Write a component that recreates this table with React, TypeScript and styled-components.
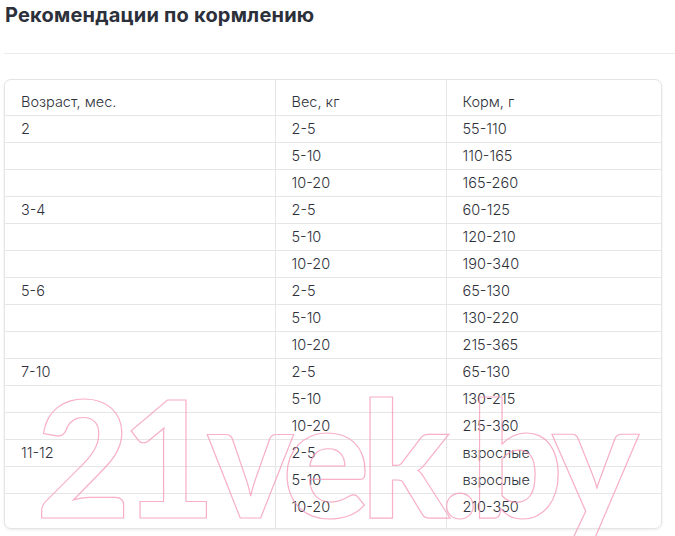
import styled, { createGlobalStyle } from 'styled-components';

const GlobalStyle = createGlobalStyle`
  html, body {
    margin: 0;
    padding: 0;
    background: #ffffff;
  }
  body {
    font-family: Inter, "Noto Sans", sans-serif;
  }
`;

type Row = { age?: string; weight: string; food: string };

const rows: Row[] = [
  { age: '2', weight: '2-5', food: '55-110' },
  { weight: '5-10', food: '110-165' },
  { weight: '10-20', food: '165-260' },
  { age: '3-4', weight: '2-5', food: '60-125' },
  { weight: '5-10', food: '120-210' },
  { weight: '10-20', food: '190-340' },
  { age: '5-6', weight: '2-5', food: '65-130' },
  { weight: '5-10', food: '130-220' },
  { weight: '10-20', food: '215-365' },
  { age: '7-10', weight: '2-5', food: '65-130' },
  { weight: '5-10', food: '130-215' },
  { weight: '10-20', food: '215-360' },
  { age: '11-12', weight: '2-5', food: 'взрослые' },
  { weight: '5-10', food: 'взрослые' },
  { weight: '10-20', food: '210-350' },
];

export default function App() {
  return (
    <>
      <GlobalStyle />
      <Page>
        <Heading>Рекомендации по кормлению</Heading>
        <Divider />
        <TableBox>
          <Table>
            <colgroup>
              <col style={{ width: 270 }} />
              <col style={{ width: 171 }} />
              <col />
            </colgroup>
            <tbody>
              <tr>
                <Cell $edge="top">Возраст, мес.</Cell>
                <Cell $edge="top">Вес, кг</Cell>
                <Cell $edge="top">Корм, г</Cell>
              </tr>
              {rows.map((r, i) => {
                const edge = i === rows.length - 1 ? 'bottom' : undefined;
                return (
                  <tr key={i}>
                    <Cell $edge={edge}>{r.age ?? ''}</Cell>
                    <Cell $edge={edge}>{r.weight}</Cell>
                    <Cell $edge={edge}>{r.food}</Cell>
                  </tr>
                );
              })}
            </tbody>
          </Table>
        </TableBox>
        <Watermark aria-hidden>21vek.by</Watermark>
      </Page>
    </>
  );
}

const Page = styled.div`
  position: relative;
  height: 536px;
  overflow: hidden;
  padding: 0 0 0 4px;
  box-sizing: border-box;
`;

const Heading = styled.h2`
  margin: 0;
  padding: 3px 0 0 1px;
  font-family: Inter, "Noto Sans", sans-serif;
  font-size: 20px;
  font-weight: 700;
  line-height: 24px;
  color: #2c303b;
  letter-spacing: 0.2px;
`;

const Divider = styled.div`
  height: 1px;
  background: #ebebeb;
  margin-top: 26px;
`;

const TableBox = styled.div`
  margin-top: 25px;
  width: 658px;
  border: 1px solid #e4e4e4;
  border-radius: 7px;
  box-shadow: 0 1px 3px rgba(0, 0, 0, 0.08);
  overflow: hidden;
  box-sizing: border-box;
`;

const Table = styled.table`
  width: 100%;
  border-collapse: collapse;
  table-layout: fixed;

  tr + tr td {
    border-top: 1px solid #e6e6e6;
  }
`;

const Cell = styled.td<{ $edge?: 'top' | 'bottom' }>`
  box-sizing: border-box;
  height: ${(p) => (p.$edge ? 35 : 27)}px;
  padding: ${(p) =>
    p.$edge === 'top' ? '8px 0 0 16px' : p.$edge === 'bottom' ? '0 0 8px 16px' : '0 0 0 16px'};
  font-family: Inter, "Noto Sans", sans-serif;
  font-size: 14.5px;
  font-weight: 300;
  color: #2f323a;
  vertical-align: middle;
  white-space: nowrap;

  & + & {
    border-left: 1px solid #e6e6e6;
  }
`;

const Watermark = styled.div`
  position: absolute;
  left: 36px;
  top: 374px;
  font-family: Lato, "Noto Sans", sans-serif;
  font-weight: 900;
  font-size: 163px;
  line-height: 1;
  letter-spacing: -9px;
  color: transparent;
  -webkit-text-stroke: 1.2px rgba(244, 150, 180, 0.75);
  pointer-events: none;
  white-space: nowrap;
`;
